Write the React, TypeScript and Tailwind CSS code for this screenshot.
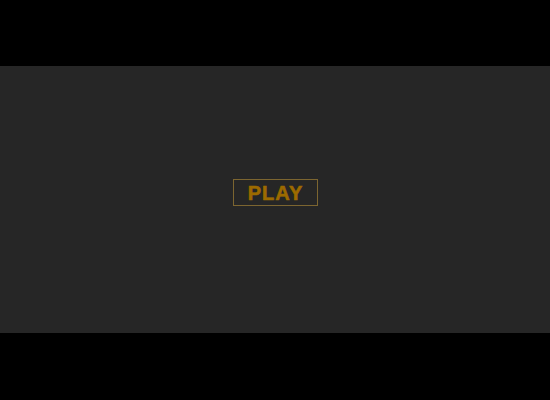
export default function App() {
  return (
    <div className="h-[400px] w-[550px] bg-black pt-[66px]">
      <div className="flex h-[267px] w-full justify-center bg-[#262626] pt-[113px]">
        <button
          type="button"
          className="flex h-[27px] w-[85px] items-center justify-center border border-[#7c6530] pl-[1px] font-['Liberation_Sans',Arial,sans-serif] text-[20px] font-bold leading-none tracking-[1px] text-[#9c6a00] [-webkit-text-stroke:0.6px_#9c6a00]"
        >
          PLAY
        </button>
      </div>
    </div>
  );
}
